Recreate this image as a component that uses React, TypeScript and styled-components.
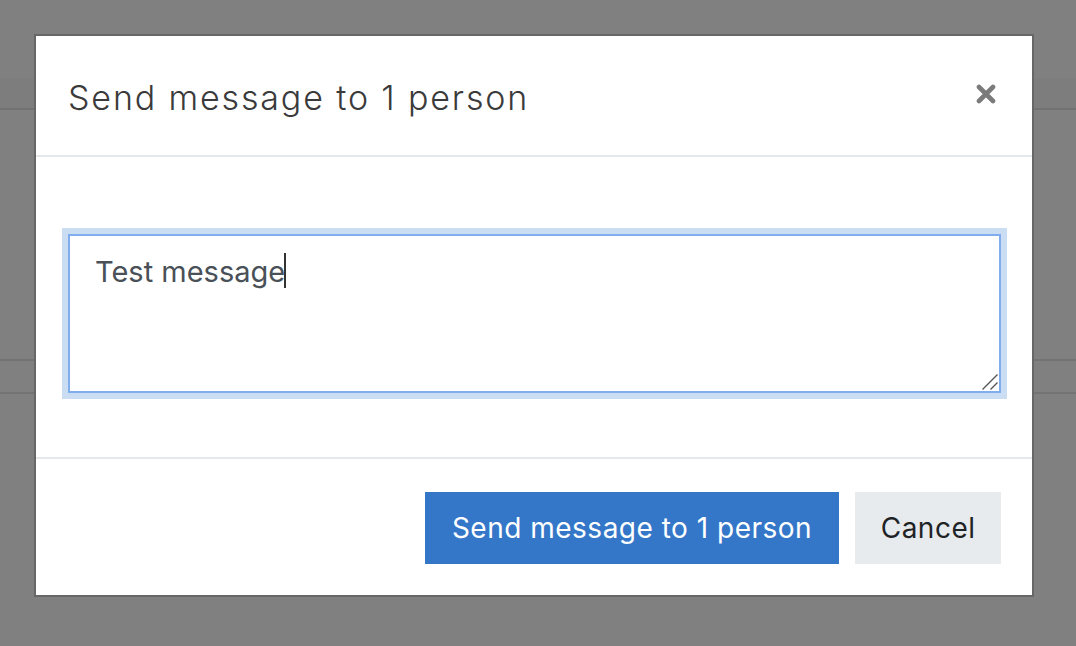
import React from "react";
import styled, { createGlobalStyle } from "styled-components";

const GlobalStyle = createGlobalStyle`
  html, body {
    margin: 0;
    padding: 0;
  }
  body {
    font-family: Inter, "Noto Sans", sans-serif;
    background: #808080;
  }
`;

const message = "Test message";
const sendLabel = "Send message to 1 person";

const App = () => {
  return (
    <SPage>
      <GlobalStyle />
      {/* the dimmed page that lies under the modal backdrop */}
      <STopBar />
      <SNavBar />
      <SContentGap />
      <STableRow />
      <SRest />

      <SModal role="dialog" aria-labelledby="modal-title">
        <SHeader>
          <STitle id="modal-title">{sendLabel}</STitle>
          <SClose aria-label="Close">
            <svg width="20" height="20" viewBox="0 0 20 20">
              <path
                d="M3 3 L17 17 M17 3 L3 17"
                stroke="#7b7b7b"
                strokeWidth="4.6"
                strokeLinecap="round"
              />
            </svg>
          </SClose>
        </SHeader>
        <SBody>
          <SFieldWrap>
            <STextArea defaultValue={message} />
            <SCaret />
            <SGrip width="18" height="18" viewBox="0 0 18 18">
              <path
                d="M1.5 16.5 L16.5 1.5 M9.5 16.5 L16.5 9.5"
                stroke="#555"
                strokeWidth="1.4"
              />
            </SGrip>
          </SFieldWrap>
        </SBody>
        <SFooter>
          <SButton $variant="primary">{sendLabel}</SButton>
          <SButton $variant="secondary">Cancel</SButton>
        </SFooter>
      </SModal>
    </SPage>
  );
};

const SPage = styled.div`
  position: relative;
  width: 100%;
  height: 646px;
  overflow: hidden;
  display: flex;
  flex-direction: column;
  background: #808080;
`;

const STopBar = styled.div`
  height: 78px;
  background: #808080;
  flex-shrink: 0;
`;

const SNavBar = styled.div`
  height: 30px;
  background: #7d7d7d;
  border-bottom: 2px solid #717171;
  flex-shrink: 0;
`;

const SContentGap = styled.div`
  height: 249px;
  flex-shrink: 0;
`;

const STableRow = styled.div`
  height: 31px;
  border-top: 2px solid #737373;
  border-bottom: 2px solid #737373;
  flex-shrink: 0;
`;

const SRest = styled.div`
  flex: 1;
`;

const SModal = styled.div`
  position: absolute;
  left: 34px;
  top: 34px;
  width: 1000px;
  height: 563px;
  box-sizing: border-box;
  background: #ffffff;
  border: 2px solid #676767;
  display: flex;
  flex-direction: column;
`;

const SHeader = styled.div`
  height: 121px;
  box-sizing: border-box;
  display: flex;
  align-items: center;
  justify-content: space-between;
  padding: 3px 36px 0 32px;
  border-bottom: 2px solid #e6e9ec;
`;

const STitle = styled.h5`
  margin: 0;
  font-size: 34px;
  font-weight: 300;
  color: #3a3a3a;
  letter-spacing: 1.85px;
`;

const SClose = styled.button`
  border: none;
  background: transparent;
  padding: 0;
  width: 20px;
  height: 20px;
  display: flex;
  margin-top: -7px;
  cursor: pointer;
`;

const SBody = styled.div`
  padding: 77px 31px 64px 32px;
  border-bottom: 2px solid #e6e9ec;
`;

const SFieldWrap = styled.div`
  position: relative;
`;

const STextArea = styled.textarea`
  display: block;
  width: 100%;
  height: 159px;
  box-sizing: border-box;
  margin: 0;
  padding: 14px 25px;
  font-family: Inter, "Noto Sans", sans-serif;
  font-size: 29px;
  line-height: 1.5;
  color: #495057;
  background: #fff;
  border: 2px solid #80aded;
  border-radius: 0;
  outline: none;
  box-shadow: 0 0 0 6px #cbddf3;
  resize: none;
`;

const SCaret = styled.span`
  position: absolute;
  left: 216px;
  top: 19px;
  width: 2px;
  height: 35px;
  background: #333;
  pointer-events: none;
`;

const SGrip = styled.svg`
  position: absolute;
  right: 2px;
  bottom: 2px;
  pointer-events: none;
`;

const SButton = styled.button<{ $variant: "primary" | "secondary" }>`
  height: 72px;
  padding: 0 ${(p) => (p.$variant === "primary" ? "27px" : "25.5px")};
  border: none;
  border-radius: 0;
  font-family: Inter, "Noto Sans", sans-serif;
  font-size: 28px;
  font-weight: 400;
  letter-spacing: 0.5px;
  cursor: pointer;
  background: ${(p) => (p.$variant === "primary" ? "#3477c9" : "#e8ebee")};
  color: ${(p) => (p.$variant === "primary" ? "#ffffff" : "#1f2326")};
`;

const SFooter = styled.div`
  flex: 1;
  display: flex;
  align-items: center;
  justify-content: flex-end;
  gap: 16px;
  padding: 1px 31px 0 32px;
`;

export default App;
